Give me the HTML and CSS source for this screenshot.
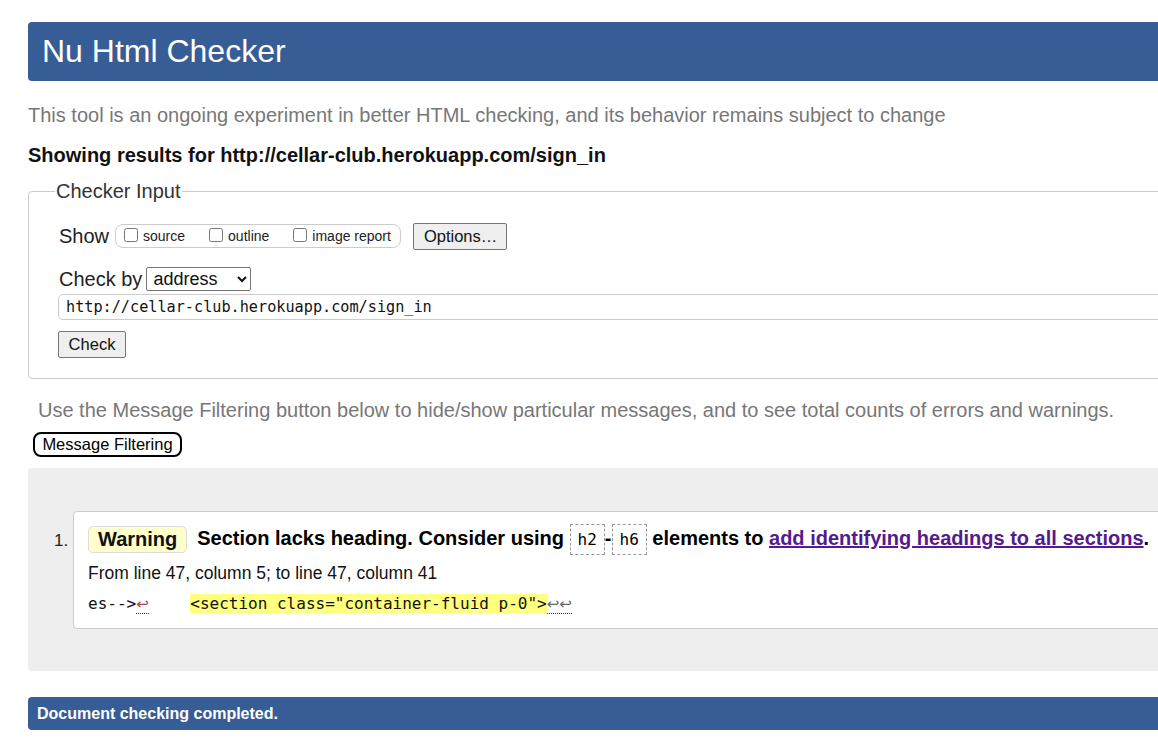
FILE: index.html
```html
<!DOCTYPE html>
<html lang="en">
<head>
<meta charset="utf-8">
<title>Showing results for http://cellar-club.herokuapp.com/sign_in - Nu Html Checker</title>
<link rel="stylesheet" href="styles.css">
</head>
<body>
<div class="page">
  <h1 class="header">Nu Html Checker</h1>
  <p class="intro">This tool is an ongoing experiment in better HTML checking, and its behavior remains subject to change</p>
  <p class="showing">Showing results for http://cellar-club.herokuapp.com/sign_in</p>
  <fieldset class="input-box">
    <legend class="legend">Checker Input</legend>
    <div class="row show-row">
      <span class="row-label">Show</span>
      <span class="show-group">
        <label class="opt"><input type="checkbox"><span>source</span></label>
        <label class="opt"><input type="checkbox"><span>outline</span></label>
        <label class="opt"><input type="checkbox"><span>image report</span></label>
      </span>
      <button class="btn options-btn" type="button">Options…</button>
    </div>
    <div class="row checkby-row">
      <span class="row-label">Check by</span>
      <select class="select"><option>address</option></select>
    </div>
    <div class="url">http://cellar-club.herokuapp.com/sign_in</div>
    <button class="btn check-btn" type="button">Check</button>
  </fieldset>
  <p class="filter-note">Use the Message Filtering button below to hide/show particular messages, and to see total counts of errors and warnings.</p>
  <button class="filter-btn" type="button">Message Filtering</button>
  <div class="results">
    <ol class="msgs">
      <li class="msg">
        <div class="msg-head">
          <span class="badge">Warning</span>
          <span class="msg-text">Section lacks heading. Consider using <code class="tag">h2</code>-<code class="tag">h6</code> elements to <a class="link" href="#">add identifying headings to all sections</a>.</span>
        </div>
        <p class="loc">From line 47, column 5; to line 47, column 41</p>
        <p class="extract"><code>es--&gt;<span class="lf lf-red">↩</span>&nbsp;&nbsp;&nbsp;&nbsp;<mark class="hl">&lt;section class="container-fluid p-0"&gt;</mark><span class="lf">↩↩</span></code></p>
      </li>
    </ol>
  </div>
  <div class="footer">Document checking completed.</div>
</div>
</body>
</html>
```

FILE: styles.css
```css
html, body {
  margin: 0;
  padding: 0;
  overflow: hidden;
  background: #fff;
}
body {
  font-family: "Liberation Sans", Arial, sans-serif;
  color: #222;
}
.page {
  width: 1240px;
  margin-left: 28px;
  padding-top: 22px;
}
.header {
  margin: 0;
  height: 59px;
  line-height: 59px;
  background: #365d95;
  color: #fff;
  font-weight: normal;
  font-size: 32px;
  padding-left: 14px;
  border-radius: 4px;
}
.intro {
  margin: 22px 0 0;
  font-size: 20px;
  line-height: 24px;
  color: #777;
}
.showing {
  margin: 16px 0 0;
  font-size: 20px;
  line-height: 24px;
  font-weight: bold;
  color: #111;
}
.input-box {
  margin: 12px 0 0;
  border: 1px solid #ccc;
  border-radius: 4px;
  padding: 4px 0 20px 30px;
  min-width: 0;
}
.legend {
  font-size: 20px;
  line-height: 24px;
  color: #333;
  padding: 0 1px;
  margin-left: -4px;
}
.row {
  display: flex;
  align-items: center;
}
.row-label {
  font-size: 20px;
  color: #222;
}
.show-row {
  height: 30px;
  margin-top: 14px;
}
.show-group {
  display: inline-flex;
  align-items: center;
  height: 22px;
  margin-left: 6px;
  padding: 0 9px 0 8px;
  border: 1px solid #ccc;
  border-radius: 8px;
  gap: 24px;
}
.opt {
  font-size: 14px;
  color: #222;
  display: inline-flex;
  align-items: center;
  gap: 5px;
}
.opt input {
  margin: 0 0 3px 0;
  width: 14px;
  height: 14px;
}
.btn {
  font-family: "Liberation Sans", Arial, sans-serif;
  font-size: 16.5px;
  color: #111;
  background: #efefef;
  border: 1px solid #767676;
  border-radius: 2px;
  padding: 0 10px;
  height: 27px;
}
.options-btn {
  margin-left: 12px;
  width: 94px;
}
.checkby-row {
  margin-top: 16px;
  height: 24px;
}
.select {
  margin-left: 4px;
  width: 105px;
  height: 24px;
  font-family: "Liberation Sans", Arial, sans-serif;
  font-size: 18px;
  color: #111;
  border: 1px solid #767676;
  border-radius: 2px;
  background: #fff;
  padding: 0 2px;
}
.url {
  margin-top: 3px;
  margin-left: -1px;
  height: 24px;
  line-height: 24px;
  border: 1px solid #ccc;
  border-radius: 5px;
  padding-left: 7px;
  font-family: "DejaVu Sans Mono", monospace;
  font-size: 15.2px;
  color: #111;
}
.check-btn {
  display: block;
  margin-top: 11px;
  margin-left: -1px;
  width: 68px;
  padding: 0;
}
.filter-note {
  margin: 19px 0 0 10px;
  font-size: 20px;
  line-height: 24px;
  color: #777;
}
.filter-btn {
  display: block;
  margin: 10px 0 0 5px;
  height: 25px;
  width: 149px;
  padding: 0;
  font-family: "Liberation Sans", Arial, sans-serif;
  font-size: 16.5px;
  color: #000;
  background: #fff;
  border: 2px solid #000;
  border-radius: 8px;
}
.results {
  margin-top: 11px;
  background: #eee;
  border-radius: 4px;
  padding: 43px 0 42px 45px;
}
.msgs {
  margin: 0;
  padding: 0;
  list-style: decimal;
  font-size: 17px;
  color: #222;
}
.msg {
  background: #fff;
  border: 1px solid #ccc;
  border-radius: 4px;
  padding: 12px 0 13px 14px;
}
.msg::marker {
  font-size: 17px;
}
.msg-head {
  display: flex;
  align-items: center;
  height: 31px;
}
.badge {
  display: inline-block;
  height: 25px;
  line-height: 25px;
  padding: 0 9px;
  background: #ffffcc;
  border: 1px solid #ddd;
  border-radius: 5px;
  font-weight: bold;
  font-size: 20px;
  color: #111;
}
.msg-text {
  margin-left: 10px;
  font-weight: bold;
  font-size: 20px;
  color: #000;
  white-space: nowrap;
}
.tag {
  display: inline-block;
  font-family: "DejaVu Sans Mono", monospace;
  font-weight: normal;
  font-size: 16px;
  line-height: 29px;
  padding: 0 7px;
  border: 1px dashed #999;
  vertical-align: middle;
  margin: 0;
}
.link {
  color: #551a8b;
}
.loc {
  margin: 8px 0 0;
  font-size: 17.5px;
  line-height: 20px;
  color: #111;
}
.extract {
  margin: 10px 0 0;
  line-height: 22px;
}
.extract code {
  font-family: "DejaVu Sans Mono", monospace;
  font-size: 16px;
  color: #111;
  white-space: pre;
}
.lf {
  font-family: "DejaVu Sans", sans-serif;
  color: #666;
  border-bottom: 1px dotted #333;
  font-size: 15px;
}
.lf-red {
  color: #a44;
}
.hl {
  background: #ffff80;
  color: #111;
  margin-left: 3px;
}
.footer {
  margin-top: 26px;
  height: 33px;
  line-height: 34px;
  background: #365d95;
  color: #fff;
  font-weight: bold;
  font-size: 16px;
  padding-left: 9px;
  border-radius: 4px;
}
```
